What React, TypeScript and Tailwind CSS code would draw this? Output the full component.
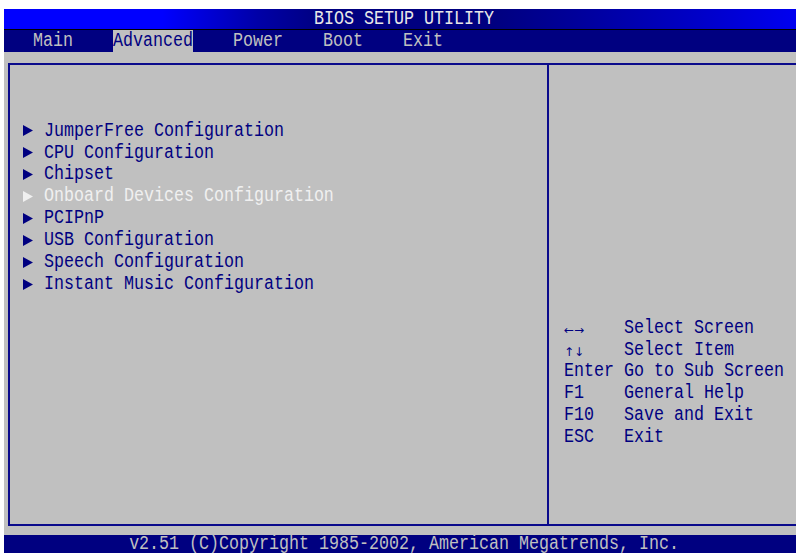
const menus = ["Main", "Advanced", "Power", "Boot", "Exit"];

const items = [
  { label: "JumperFree Configuration" },
  { label: "CPU Configuration" },
  { label: "Chipset" },
  { label: "Onboard Devices Configuration", active: true },
  { label: "PCIPnP" },
  { label: "USB Configuration" },
  { label: "Speech Configuration" },
  { label: "Instant Music Configuration" },
];

const keys: [string, string, boolean?][] = [
  ["←→", "Select Screen", true],
  ["↑↓", "Select Item", true],
  ["Enter", "Go to Sub Screen"],
  ["F1", "General Help"],
  ["F10", "Save and Exit"],
  ["ESC", "Exit"],
];

function Arrow({ light }: { light?: boolean }) {
  return (
    <svg width="10" height="11" viewBox="0 0 10 11" className="shrink-0">
      <polygon points="0,0 10,5.5 0,11" fill={light ? "#f0f0f0" : "#000080"} />
    </svg>
  );
}

export default function App() {
  return (
    <div className="w-[796px] h-[553px] bg-white pl-[4px] pt-[9px] flex flex-col overflow-hidden font-['Liberation_Mono',monospace] text-[16.67px] leading-none">
      {/* title strip */}
      <div className="h-[20px] shrink-0 flex items-center justify-center pl-[8px] text-[#e8e8e8] bg-[linear-gradient(to_right,#0000ff_0%,#0000ff_20%,#0000a8_32%,#000080_40%,#000080_62%,#00009a_72%,#0000c8_88%,#0000f0_100%)]">
        <span className="inline-block scale-y-[1.2]">BIOS SETUP UTILITY</span>
      </div>
      <div className="h-[1px] shrink-0 bg-black" />

      {/* menu bar */}
      <div className="h-[22px] shrink-0 bg-[#000080] flex items-stretch pl-[29px] gap-[40px]">
        {menus.map((m) => (
          <div
            key={m}
            className={
              m === "Advanced"
                ? "flex items-center bg-[#c0c0c0] text-[#000080]"
                : "flex items-center text-[#c0c0c0]"
            }
          >
            <span className="inline-block scale-y-[1.2]">{m}</span>
          </div>
        ))}
      </div>

      {/* main panel */}
      <div className="flex-1 bg-[#c0c0c0] pt-[11px] pl-[4px] pb-[9px] flex">
        <div className="flex-1 flex border-l-2 border-t-2 border-b-2 border-[#0a0a8c]">
          <div className="w-[539px] shrink-0 border-r-2 border-[#0a0a8c] pt-[55px] pl-[13px]">
            {items.map((it) => (
              <div
                key={it.label}
                className={
                  it.active
                    ? "h-[21.9px] flex items-center gap-[11px] text-[#f0f0f0]"
                    : "h-[21.9px] flex items-center gap-[11px] text-[#000080]"
                }
              >
                <Arrow light={it.active} />
                <span className="inline-block scale-y-[1.2] whitespace-pre">{it.label}</span>
              </div>
            ))}
          </div>

          <div className="flex-1 flex flex-col justify-end pb-[76px] pl-[15px] text-[#000080]">
            {keys.map(([k, d, small]) => (
              <div key={d} className="h-[21.8px] flex items-center whitespace-pre">
                <span
                  className={
                    small
                      ? "w-[60px] shrink-0 text-[12px] pt-[4px] font-['DejaVu_Sans',sans-serif]"
                      : "w-[60px] shrink-0 inline-block scale-y-[1.2]"
                  }
                >
                  {k}
                </span>
                <span className="inline-block scale-y-[1.2]">{d}</span>
              </div>
            ))}
          </div>
        </div>
      </div>

      {/* footer */}
      <div className="h-[18px] shrink-0 bg-[#000080] flex items-center justify-center text-[#c0c0c0] pl-[8px]">
        <span className="inline-block scale-y-[1.2] whitespace-pre">
          v2.51 (C)Copyright 1985-2002, American Megatrends, Inc.
        </span>
      </div>
    </div>
  );
}
